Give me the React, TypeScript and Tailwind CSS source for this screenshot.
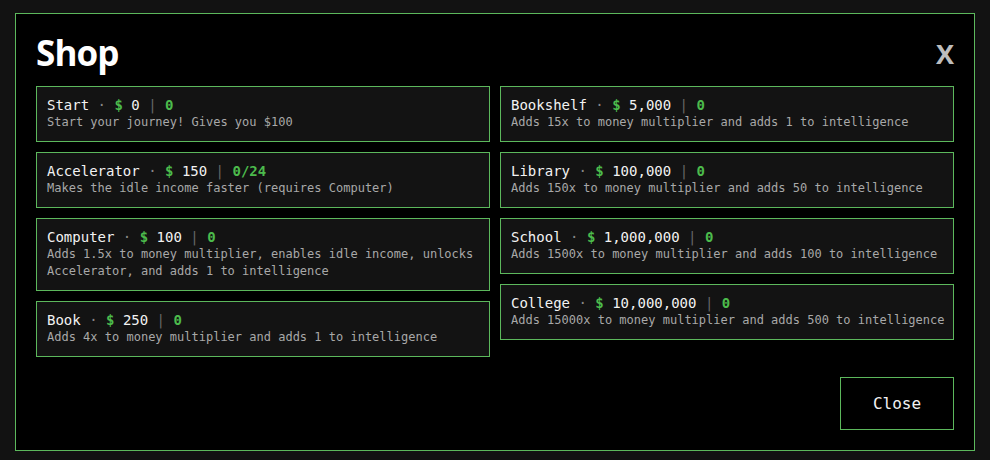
import React from "react";

type Item = {
  name: string;
  price: string;
  owned: string;
  desc: string;
};

const left: Item[] = [
  { name: "Start", price: "0", owned: "0", desc: "Start your journey! Gives you $100" },
  { name: "Accelerator", price: "150", owned: "0/24", desc: "Makes the idle income faster (requires Computer)" },
  {
    name: "Computer",
    price: "100",
    owned: "0",
    desc: "Adds 1.5x to money multiplier, enables idle income, unlocks Accelerator, and adds 1 to intelligence",
  },
  { name: "Book", price: "250", owned: "0", desc: "Adds 4x to money multiplier and adds 1 to intelligence" },
];

const right: Item[] = [
  { name: "Bookshelf", price: "5,000", owned: "0", desc: "Adds 15x to money multiplier and adds 1 to intelligence" },
  { name: "Library", price: "100,000", owned: "0", desc: "Adds 150x to money multiplier and adds 50 to intelligence" },
  { name: "School", price: "1,000,000", owned: "0", desc: "Adds 1500x to money multiplier and adds 100 to intelligence" },
  { name: "College", price: "10,000,000", owned: "0", desc: "Adds 15000x to money multiplier and adds 500 to intelligence" },
];

function ShopItem({ item }: { item: Item }) {
  return (
    <div className="border border-[#5cb85c] bg-[#131313] pl-[10px] pr-[4px] pt-[9px] pb-[10px]">
      <div className="text-[14px] leading-[18px] text-[#f2f2f2] whitespace-pre">
        <span className="font-medium">{item.name}</span>
        <span className="text-[#888]"> · </span>
        <span className="font-bold text-[#4cbb4c]">$</span>
        <span> {item.price}</span>
        <span className="text-[#666]"> | </span>
        <span className="font-bold text-[#4cbb4c]">{item.owned}</span>
      </div>
      <p className="text-[12px] leading-[17px] text-[#a8a8a8] pr-[4px]">{item.desc}</p>
    </div>
  );
}

export default function App() {
  return (
    <div
      className="w-[990px] h-[460px] bg-[#121212] pt-[13px] pl-[15px]"
      style={{ fontFamily: '"DejaVu Sans Mono", "Liberation Mono", monospace' }}
    >
      <div className="w-[960px] h-[438px] border border-[#5cb85c] bg-black p-5 flex flex-col">
        <header className="flex items-start justify-between h-[38px] mb-[14px]">
          <h2 className="text-[35px] leading-[38px] font-bold text-white font-['Open_Sans',sans-serif] tracking-tight">
            Shop
          </h2>
          <button className="text-[27px] leading-none font-bold text-[#bdbdbd] font-['Open_Sans',sans-serif] mt-[6px]">
            X
          </button>
        </header>

        <div className="grid grid-cols-2 gap-[10px] items-start">
          <div className="flex flex-col gap-[10px]">
            {left.map((it) => (
              <ShopItem key={it.name} item={it} />
            ))}
          </div>
          <div className="flex flex-col gap-[10px]">
            {right.map((it) => (
              <ShopItem key={it.name} item={it} />
            ))}
          </div>
        </div>

        <div className="mt-auto flex justify-end">
          <button className="w-[114px] h-[53px] border border-[#5cb85c] bg-black text-[16px] text-[#f2f2f2]">
            Close
          </button>
        </div>
      </div>
    </div>
  );
}
